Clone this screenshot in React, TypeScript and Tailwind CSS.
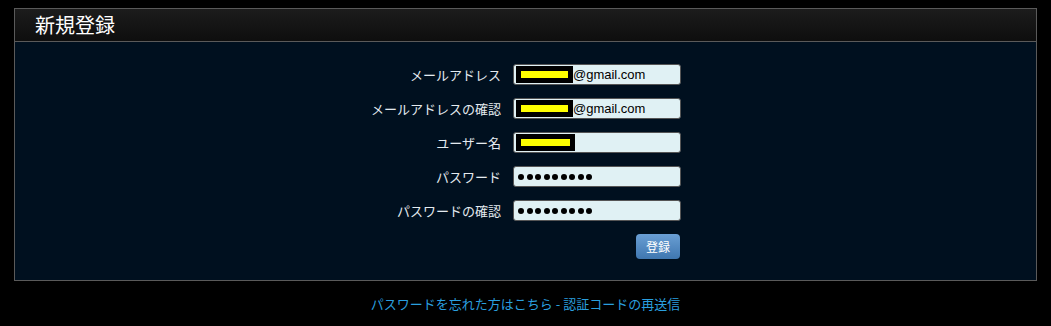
const font = { fontFamily: '"Noto Sans CJK JP", "Liberation Sans", sans-serif' }

function Redacted({ w = 'w-[57px]' }: { w?: string }) {
  return (
    <span className={`inline-flex h-[17px] ${w} items-center bg-black px-[5px]`}>
      <span className="h-[7px] w-full bg-[#ffff00]" />
    </span>
  )
}

function Field({ children }: { children: React.ReactNode }) {
  return (
    <div className="flex h-[21px] w-[168px] items-center rounded-[3px] border border-[#555] bg-[#e0f1f4] pl-[2px] font-['Liberation_Sans',sans-serif] text-[13px] text-black">
      {children}
    </div>
  )
}

function Dots() {
  return (
    <span className="flex gap-[2.5px] pl-[2px]">
      {Array.from({ length: 9 }).map((_, i) => (
        <span key={i} className="h-[6px] w-[6px] rounded-full bg-black" />
      ))}
    </span>
  )
}

const rows: { label: string; field: React.ReactNode }[] = [
  { label: 'メールアドレス', field: <><Redacted />@gmail.com</> },
  { label: 'メールアドレスの確認', field: <><Redacted />@gmail.com</> },
  { label: 'ユーザー名', field: <Redacted w="w-[59px]" /> },
  { label: 'パスワード', field: <Dots /> },
  { label: 'パスワードの確認', field: <Dots /> },
]

export default function App() {
  return (
    <div className="h-[326px] w-[1051px] bg-black pt-[8px]" style={font}>
      <div className="mx-[14px] border border-[#5a5a5a]">
        <div className="flex h-[33px] items-center border-b border-[#5a5a5a] bg-gradient-to-b from-[#1c1c1c] to-[#0e0e0e] pl-[20px] text-[20px] text-white">
          新規登録
        </div>
        <div className="bg-[#00101f] pt-[22px] pb-[21px]">
          <div className="flex flex-col gap-[13px]">
            {rows.map((r) => (
              <div key={r.label} className="flex items-center">
                <div className="w-[486px] text-right text-[13px] text-[#e4ebf0]">{r.label}</div>
                <div className="ml-[12px]">
                  <Field>{r.field}</Field>
                </div>
              </div>
            ))}
          </div>
          <div className="mt-[13px] flex">
            <div className="ml-[621px] flex h-[25px] w-[44px] items-center justify-center rounded-[4px] bg-gradient-to-b from-[#6a9fd4] to-[#3f77b0] text-[12px] text-white">
              登録
            </div>
          </div>
        </div>
      </div>
      <div className="mt-[13px] text-center text-[13px] text-[#2a9fdf]">
        <span>パスワードを忘れた方はこちら</span> - <span>認証コードの再送信</span>
      </div>
    </div>
  )
}
